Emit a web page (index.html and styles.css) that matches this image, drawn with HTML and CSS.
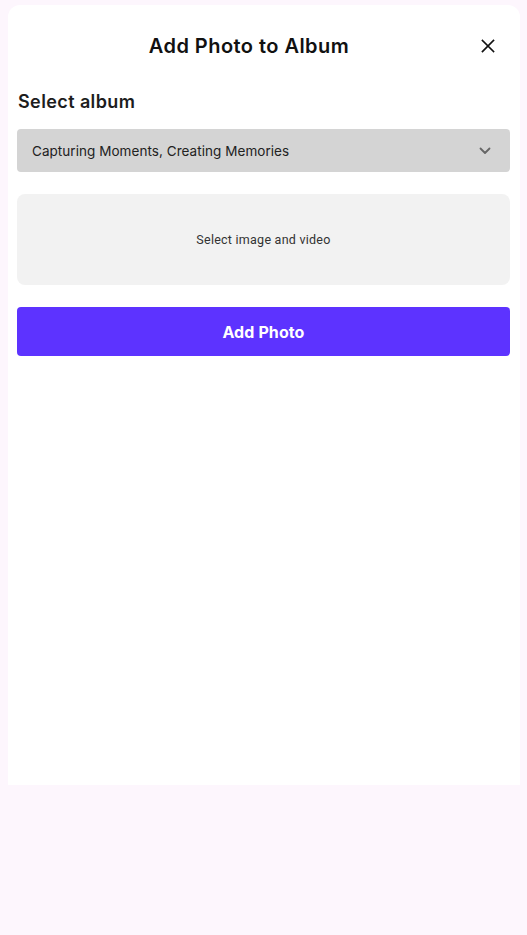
FILE: index.html
```html
<!DOCTYPE html>
<html lang="en">
<head>
<meta charset="utf-8">
<title>Add Photo to Album</title>
<link rel="stylesheet" href="styles.css">
</head>
<body>
<div class="card">
  <div class="header">
    <h1 class="title">Add Photo to Album</h1>
    <button class="close" aria-label="Close">
      <svg width="14" height="14" viewBox="0 0 14 14"><path d="M1.5 1.5L12.5 12.5M12.5 1.5L1.5 12.5" stroke="#111" stroke-width="1.7" fill="none" stroke-linecap="square"/></svg>
    </button>
  </div>
  <h2 class="label">Select album</h2>
  <div class="select">
    <span class="select-text">Capturing Moments, Creating Memories</span>
    <svg class="chevron" width="12" height="8" viewBox="0 0 12 8"><path d="M1.5 1.5L6 6L10.5 1.5" stroke="#666" stroke-width="1.8" fill="none" stroke-linecap="round" stroke-linejoin="round"/></svg>
  </div>
  <div class="upload">Select image and video</div>
  <button class="primary">Add Photo</button>
</div>
</body>
</html>
```
FILE: styles.css
```css
html, body {
  margin: 0;
  padding: 0;
  background: #fdf6fd;
}
body {
  font-family: "Inter", "Open Sans", sans-serif;
  color: #111;
}
.card {
  margin: 5px 7px 0 8px;
  height: 780px;
  background: #fff;
  border-radius: 12px 12px 0 0;
  padding: 0 10px 0 9px;
  box-sizing: border-box;
}
.header {
  display: flex;
  align-items: center;
  height: 40px;
  padding-top: 21px;
}
.title {
  flex: 1;
  margin: 0;
  text-align: center;
  font-size: 20px;
  font-weight: 600;
  letter-spacing: 0.45px;
  color: #111;
}
.close {
  width: 29px;
  height: 29px;
  padding: 0;
  border: 0;
  background: none;
  display: flex;
  align-items: center;
  justify-content: flex-start;
}
.label {
  margin: 25px 0 0 1px;
  font-size: 18px;
  font-weight: 600;
  line-height: 22px;
  letter-spacing: 0.4px;
  color: #1d1d1d;
}
.select {
  margin-top: 16px;
  height: 43px;
  background: #d4d4d4;
  border-radius: 4px;
  display: flex;
  align-items: center;
  justify-content: space-between;
  padding: 0 19px 0 15px;
}
.select-text {
  font-size: 13.5px;
  color: #222;
  letter-spacing: 0.05px;
}
.upload {
  margin-top: 22px;
  height: 91px;
  background: #f2f2f2;
  border-radius: 8px;
  display: flex;
  align-items: center;
  justify-content: center;
  font-family: "Roboto", sans-serif;
  font-size: 12.5px;
  color: #333;
  letter-spacing: 0.25px;
}
.primary {
  display: block;
  width: 100%;
  margin-top: 22px;
  height: 49px;
  border: 0;
  border-radius: 4px;
  background: #5d33ff;
  color: #fff;
  font-family: "Inter", sans-serif;
  font-size: 16px;
  font-weight: 700;
  letter-spacing: 0.1px;
}
```
